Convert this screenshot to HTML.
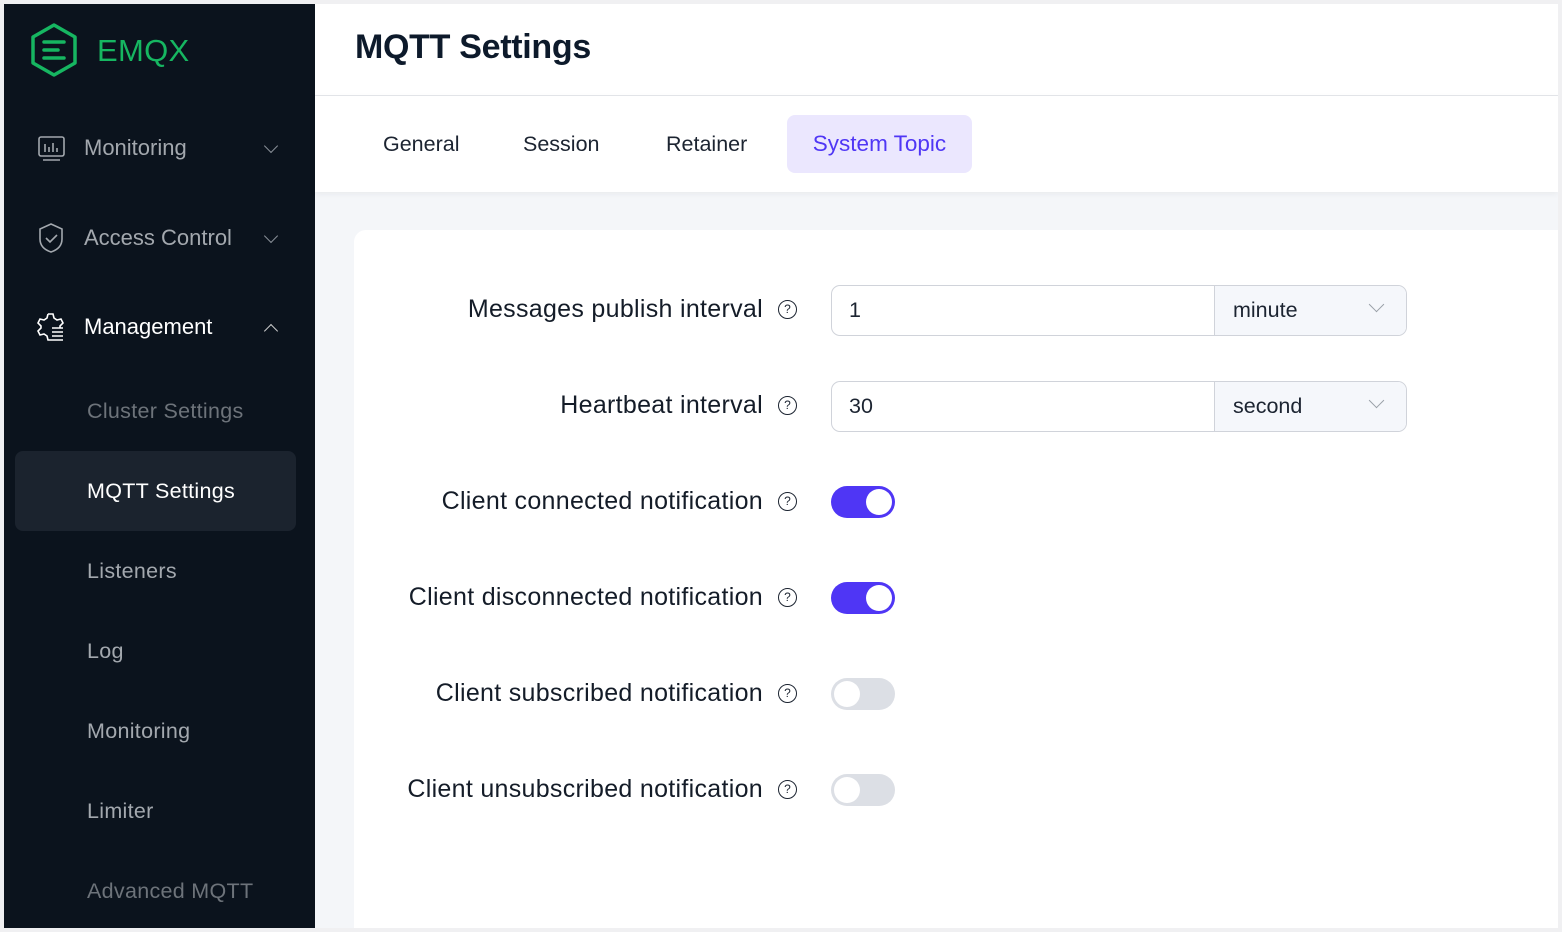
<!DOCTYPE html>
<html><head><style>
*{box-sizing:border-box;margin:0;padding:0}
body{width:1562px;height:932px;background:#f0f0f2;font-family:"Liberation Sans",sans-serif;position:relative;overflow:hidden}
.frame{position:absolute;left:4px;top:4px;width:1554px;height:924px;background:#f4f6f9;overflow:hidden}
.side{position:absolute;left:0;top:0;width:311px;height:924px;background:#0b131d}
.logo{position:absolute;left:24px;top:18px}
.logotxt{position:absolute;left:93px;top:29px;color:#16b661;font-size:31px;font-weight:normal;letter-spacing:0.3px}
.mi{position:absolute;left:80px;font-size:22px;color:#a3a8ae}
.sub{position:absolute;left:83px;font-size:21.5px;color:#a3a8ae;letter-spacing:0.3px}
.chev{position:absolute;left:262px;width:10px;height:10px;border-right:1.5px solid #8a9098;border-bottom:1.5px solid #8a9098;transform:rotate(45deg)}
.header{position:absolute;left:311px;top:0;right:0;height:92px;background:#fff;border-bottom:1px solid #e4e6ea}
.header h1{position:absolute;left:40px;top:24px;font-size:34px;font-weight:bold;color:#0d1a2b;letter-spacing:-0.3px}
.tabs{position:absolute;left:311px;top:92px;right:0;height:96px;background:#fff;box-shadow:0 2px 6px rgba(0,0,0,.05)}
.tab{position:absolute;top:36px;font-size:21.5px;color:#1c2431}
.tabact{position:absolute;left:472px;top:19px;width:185px;height:58px;background:#ebe7fe;border-radius:8px;color:#4f36f5;font-size:22.5px;text-align:center;line-height:58px}
.card{position:absolute;left:350px;top:226px;width:1220px;height:720px;background:#fff;border-radius:12px}
.lab{position:absolute;right:795px;font-size:25px;letter-spacing:0.3px;color:#141c28;text-align:right;white-space:nowrap}
.q{position:absolute;left:774px;width:19px;height:19px;border:1.5px solid #1c2431;border-radius:50%;font-size:12px;text-align:center;line-height:16px;color:#1c2431}
.inp{position:absolute;left:827px;width:576px;height:51px;border:1.5px solid #d0d3da;border-radius:9px;overflow:hidden;background:#fff}
.inp .v{position:absolute;left:17px;top:12px;font-size:21.5px;color:#1c2431}
.inp .u{position:absolute;left:382px;top:0;right:0;bottom:0;background:#f5f7fb;border-left:1.5px solid #d0d3da}
.inp .u span{position:absolute;left:18px;top:12px;font-size:21.5px;color:#1c2431}
.inp .u i{position:absolute;right:24px;top:13px;width:11px;height:11px;border-right:1.5px solid #9aa0a8;border-bottom:1.5px solid #9aa0a8;transform:rotate(45deg)}
.sw{position:absolute;left:827px;width:64px;height:32px;border-radius:16px}
.sw.on{background:#4f36f5}.sw.off{background:#dcdfe5}
.sw b{position:absolute;top:3px;width:26px;height:26px;border-radius:50%;background:#fff}
.sw.on b{right:3px}.sw.off b{left:3px}
</style></head><body>
<div class="frame">
<div class="side">
<svg class="logo" width="52" height="56" viewBox="0 0 52 56"><path d="M26 3 L47 15 L47 41 L26 53 L5 41 L5 15 Z" fill="none" stroke="#16b661" stroke-width="3.5" stroke-linejoin="round"/><path d="M16 20h20M16 28h14M16 36h20" stroke="#16b661" stroke-width="3.5" stroke-linecap="round"/></svg>
<div class="logotxt">EMQX</div>
<svg style="position:absolute;left:33px;top:130px" width="30" height="30" viewBox="0 0 30 30" fill="none" stroke="#a3a8ae" stroke-width="1.6"><rect x="2" y="3" width="25" height="19" rx="2"/><path d="M6 26h17M8 10v8M12 13v5M16 9v9M20 14v4"/></svg>
<div class="mi" style="top:131px">Monitoring</div><div class="chev" style="top:137px"></div>
<svg style="position:absolute;left:33px;top:218px" width="28" height="32" viewBox="0 0 28 32" fill="none" stroke="#a3a8ae" stroke-width="1.6"><path d="M14 2 L25 7 V17 C25 24 20 28 14 30 C8 28 3 24 3 17 V7 Z"/><path d="M9 16 l4 4 l7-7"/></svg>
<div class="mi" style="top:221px">Access Control</div><div class="chev" style="top:227px"></div>
<svg style="position:absolute;left:32px;top:308px" width="30" height="30" viewBox="0 0 30 30" fill="none" stroke="#fff" stroke-width="1.6"><path d="M12 2h5l1 4 3 2 4-1 2 4-3 3v2M12 2l-1 4-3 2-4-1-2 4 3 3v2l-3 3 2 4 4-1 3 2 1 4h4"/><path d="M16 16h11M16 20h11M16 24h11M16 28h11"/></svg>
<div class="mi" style="top:310px;color:#fff">Management</div><div class="chev" style="top:322px;transform:rotate(-135deg);border-color:#ccc"></div>
<div class="sub" style="top:395px;color:#6d737a">Cluster Settings</div>
<div style="position:absolute;left:11px;top:447px;width:281px;height:80px;background:#1b232e;border-radius:8px"></div>
<div class="sub" style="top:475px;color:#fff">MQTT Settings</div>
<div class="sub" style="top:555px">Listeners</div>
<div class="sub" style="top:635px">Log</div>
<div class="sub" style="top:715px">Monitoring</div>
<div class="sub" style="top:795px">Limiter</div>
<div class="sub" style="top:875px;color:#6d737a">Advanced MQTT</div>
</div>
<div class="header"><h1>MQTT Settings</h1></div>
<div class="tabs">
<div class="tab" style="left:68px">General</div>
<div class="tab" style="left:208px">Session</div>
<div class="tab" style="left:351px">Retainer</div>
<div class="tabact">System Topic</div>
</div>
<div class="card"></div>
<div class="lab" style="top:291px">Messages publish interval</div><div class="q" style="top:296px">?</div>
<div class="inp" style="top:281px"><div class="v">1</div><div class="u"><span>minute</span><i></i></div></div>
<div class="lab" style="top:387px">Heartbeat interval</div><div class="q" style="top:392px">?</div>
<div class="inp" style="top:377px"><div class="v">30</div><div class="u"><span>second</span><i></i></div></div>
<div class="lab" style="top:483px">Client connected notification</div><div class="q" style="top:488px">?</div>
<div class="sw on" style="top:482px"><b></b></div>
<div class="lab" style="top:579px">Client disconnected notification</div><div class="q" style="top:584px">?</div>
<div class="sw on" style="top:578px"><b></b></div>
<div class="lab" style="top:675px">Client subscribed notification</div><div class="q" style="top:680px">?</div>
<div class="sw off" style="top:674px"><b></b></div>
<div class="lab" style="top:771px">Client unsubscribed notification</div><div class="q" style="top:776px">?</div>
<div class="sw off" style="top:770px"><b></b></div>
</div>
</body></html>
